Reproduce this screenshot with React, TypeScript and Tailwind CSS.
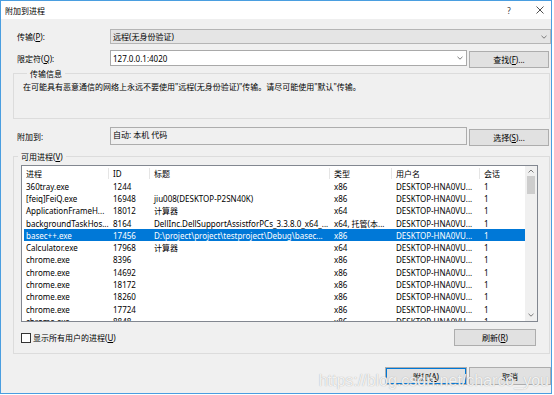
const USER = 'DESKTOP-HNA0VU...';

const ROWS: string[][] = [
  ['360tray.exe', '1244', '', 'x86'],
  ['[feiq]FeiQ.exe', '16948', 'jiu008(DESKTOP-P2SN40K)', 'x86'],
  ['ApplicationFrameH...', '18012', '计算器', 'x64'],
  ['backgroundTaskHos...', '8164', 'DellInc.DellSupportAssistforPCs_3.3.8.0_x64_...', 'x64, 托管(本...'],
  ['basec++.exe', '17456', 'D:\\project\\project\\testproject\\Debug\\basec...', 'x86'],
  ['Calculator.exe', '17968', '计算器', 'x64'],
  ['chrome.exe', '8396', '', 'x86'],
  ['chrome.exe', '14692', '', 'x86'],
  ['chrome.exe', '18172', '', 'x86'],
  ['chrome.exe', '18260', '', 'x86'],
  ['chrome.exe', '17724', '', 'x86'],
  ['chrome.exe', '8848', '', 'x86'],
];
const SELECTED = 4;

function Chevron({ up }: { up?: boolean }) {
  return (
    <svg width="6" height="4" viewBox="0 0 6 4">
      <path
        d={up ? 'M0.5 3.5 L3 1 L5.5 3.5' : 'M0.5 0.8 L3 3.2 L5.5 0.8'}
        fill="none"
        stroke="#6d6d6d"
        strokeWidth="0.9"
      />
    </svg>
  );
}

function Btn({ children, className = '' }: { children: React.ReactNode; className?: string }) {
  return (
    <div
      className={`flex items-center justify-center h-[17px] bg-[#e1e1e1] border border-[#adadad] ${className}`}
    >
      {children}
    </div>
  );
}

function U({ c }: { c: string }) {
  return <span className="underline underline-offset-[1px]">{c}</span>;
}

function Cells({ r, sel }: { r: string[]; sel: boolean }) {
  return (
    <div
      className={`flex items-center h-[12.3px] whitespace-nowrap ${sel ? 'bg-[#0078d7] text-white' : ''}`}
    >
      <div className="w-[85px] pl-[2px] overflow-hidden">{r[0]}</div>
      <div className="w-[41px] pl-[4px] overflow-hidden">{r[1]}</div>
      <div className="w-[180px] pl-[4px] overflow-hidden">{r[2]}</div>
      <div className="w-[62px] pl-[4px] overflow-hidden">{r[3]}</div>
      <div className="w-[88px] pl-[4px] overflow-hidden">{USER}</div>
      <div className="flex-1 pl-[4px]">1</div>
    </div>
  );
}

export default function App() {
  return (
    <div className="w-[554px] h-[395px] bg-white text-[8px] leading-[11px] text-black font-['Noto_Sans','Noto_Sans_CJK_SC',sans-serif]">
      <div className="relative w-[552px] h-[394px] border border-[#4a9ee0] bg-[#f0f0f0] flex flex-col">
        {/* title bar */}
        <div className="h-[18px] bg-white flex items-center pl-[4px]">
          <span>附加到进程</span>
          <div className="ml-auto flex items-center gap-[11px] mr-[1px]">
            <span className="w-[20px] text-center text-[#333]">?</span>
            <svg width="20" height="10" viewBox="0 0 20 10">
              <path d="M6.5 1.5 L13.5 8.5 M13.5 1.5 L6.5 8.5" stroke="#222" strokeWidth="0.8" />
            </svg>
          </div>
        </div>

        <div className="flex flex-col pl-[12px]">
          {/* transport */}
          <div className="mt-[10px] flex items-center h-[15px]">
            <div className="ml-[4px] w-[93px]">
              传输(<U c="P" />):
            </div>
            <div className="flex-1 h-[15px] bg-[#e5e5e5] border border-[#b5b5b5] flex items-center pl-[2px] pr-[3px]">
              <span>远程(无身份验证)</span>
              <span className="ml-auto">
                <Chevron />
              </span>
            </div>
          </div>

          {/* qualifier */}
          <div className="mt-[6px] flex items-start h-[17px]">
            <div className="ml-[4px] w-[93px] h-[16px] flex items-center">
              限定符(<U c="Q" />):
            </div>
            <div className="w-[357px] h-[16px] bg-white border border-[#a9a9a9] flex items-center pl-[2px] pr-[3px]">
              <span>127.0.0.1:4020</span>
              <span className="ml-auto">
                <Chevron />
              </span>
            </div>
            <Btn className="ml-[2px] mt-[1px] w-[80px] h-[16px]">
              查找(<U c="F" />)...
            </Btn>
          </div>

          {/* info group */}
          <fieldset className="mt-[1px] mr-[1px] h-[51px] border border-[#dcdcdc] pl-[9px]">
            <legend className="ml-[4px] px-[3px]">传输信息</legend>
            <div className="mt-[2px]">
              在可能具有恶意通信的网络上永远不要使用"远程(无身份验证)"传输。请尽可能使用"默认"传输。
            </div>
          </fieldset>

          {/* attach to */}
          <div className="mt-[8px] flex items-start h-[19px]">
            <div className="ml-[4px] w-[93px] h-[18px] flex items-center">附加到:</div>
            <div className="w-[357px] h-[18px] bg-[#f0f0f0] border border-[#adadad] pl-[2px] pt-[1px]">
              自动: 本机 代码
            </div>
            <Btn className="ml-[2px] mt-[2px] w-[80px]">
              选择(<U c="S" />)...
            </Btn>
          </div>

          {/* processes group */}
          <fieldset className="mt-[5px] mr-[1px] h-[203px] border border-[#dcdcdc]">
            <legend className="ml-[4px] px-[3px]">
              可用进程(<U c="V" />)
            </legend>
            <div className="mt-[3px] ml-[7px] w-[517px] h-[157px] bg-white border border-[#828790] flex overflow-hidden">
              <div className="flex-1 min-w-0 pl-[2px] overflow-hidden">
                <div className="flex items-center h-[14px] whitespace-nowrap">
                  <div className="w-[85px] pl-[2px] border-r border-[#e5e5e5]">进程</div>
                  <div className="w-[41px] pl-[4px] border-r border-[#e5e5e5]">ID</div>
                  <div className="w-[180px] pl-[4px] border-r border-[#e5e5e5]">标题</div>
                  <div className="w-[62px] pl-[4px] border-r border-[#e5e5e5]">类型</div>
                  <div className="w-[88px] pl-[4px] border-r border-[#e5e5e5]">用户名</div>
                  <div className="flex-1 pl-[4px]">会话</div>
                </div>
                {ROWS.map((r, i) => (
                  <Cells key={i} r={r} sel={i === SELECTED} />
                ))}
              </div>
              <div className="w-[12px] bg-[#f0f0f0] flex flex-col items-center">
                <div className="h-[10px] flex items-center">
                  <Chevron up />
                </div>
                <div className="w-[8px] h-[18px] bg-[#cdcdcd]" />
                <div className="mt-auto h-[12px] flex items-center">
                  <Chevron />
                </div>
              </div>
            </div>

            <div className="mt-[7px] pl-[7px] pr-[13px] flex items-center justify-between">
              <div className="flex items-center">
                <div className="w-[10px] h-[10px] bg-white border border-[#333]" />
                <span className="ml-[2px]">
                  显示所有用户的进程(<U c="U" />)
                </span>
              </div>
              <Btn className="w-[82px]">
                刷新(<U c="R" />)
              </Btn>
            </div>
          </fieldset>

          {/* bottom buttons */}
          <div className="mt-[13px] flex justify-end gap-[2px]">
            <Btn className="w-[82px] h-[18px] border-[#0078d7] shadow-[inset_0_0_0_1px_#0078d7]">
              附加(<U c="A" />)
            </Btn>
            <Btn className="w-[82px] h-[18px]">取消</Btn>
          </div>
        </div>

        {/* watermark */}
        <div className="absolute right-[2px] bottom-[1px] text-[16px] leading-[22px] font-['Liberation_Sans',sans-serif] text-white/85 [text-shadow:0_0_1px_#9a9a9a]">
          https://blog.csdn.net/charco_you
        </div>
      </div>
    </div>
  );
}
